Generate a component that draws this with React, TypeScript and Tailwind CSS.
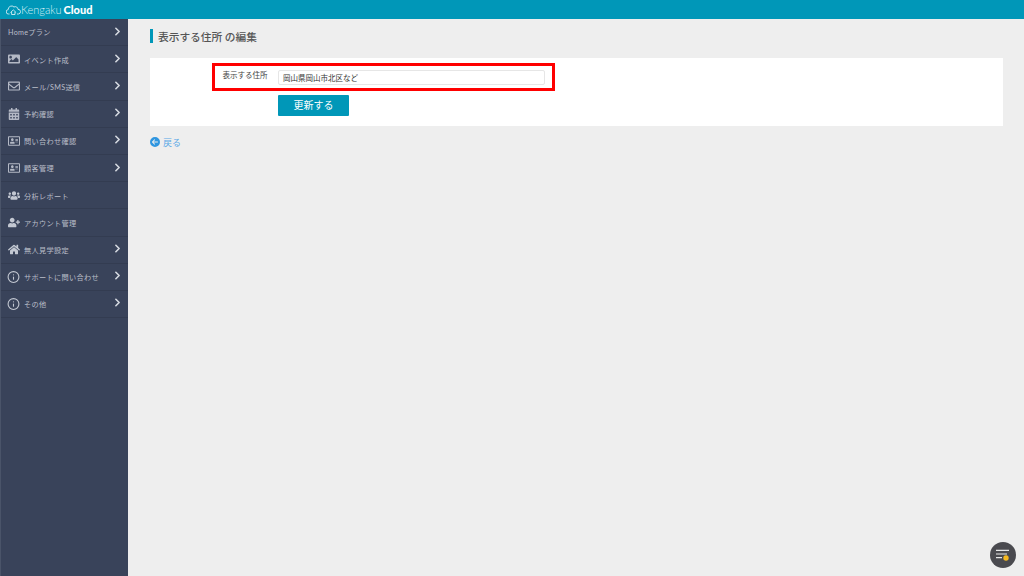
import { ChevronRight } from 'lucide-react'
import { FaCalendarAlt, FaHome, FaImage, FaRegEnvelope, FaUserPlus, FaUsers, FaRegAddressCard } from 'react-icons/fa'
import { FiInfo } from 'react-icons/fi'
import { FaCircleArrowLeft } from 'react-icons/fa6'
import type { ReactNode } from 'react'

const FONT = '[font-family:Lato,"Noto_Sans_CJK_JP",sans-serif]'

type MenuItem = { label: string; icon?: ReactNode; arrow: boolean }

const iconClass = 'h-[12px] w-[12px] text-[#b4b9c5]'
const wideIconClass = 'h-[13px] w-[13px] text-[#c3c8d2]'
const infoIconClass = '-ml-[1px] h-[14px] w-[14px] text-[#c3c8d2]'

const menu: MenuItem[] = [
    { label: 'Homeプラン', arrow: true },
    { label: 'イベント作成', icon: <FaImage className={iconClass} />, arrow: true },
    { label: 'メール/SMS送信', icon: <FaRegEnvelope className={iconClass} />, arrow: true },
    { label: '予約確認', icon: <FaCalendarAlt className={iconClass} />, arrow: true },
    { label: '問い合わせ確認', icon: <FaRegAddressCard className={iconClass} />, arrow: true },
    { label: '顧客管理', icon: <FaRegAddressCard className={iconClass} />, arrow: true },
    { label: '分析レポート', icon: <FaUsers className={wideIconClass} />, arrow: false },
    { label: 'アカウント管理', icon: <FaUserPlus className={wideIconClass} />, arrow: false },
    { label: '無人見学設定', icon: <FaHome className={wideIconClass} />, arrow: true },
    { label: 'サポートに問い合わせ', icon: <FiInfo className={infoIconClass} />, arrow: true },
    { label: 'その他', icon: <FiInfo className={infoIconClass} />, arrow: true },
]

function Logo() {
    return (
        <div className="flex items-center pl-[6px]">
            <svg width="15" height="11" viewBox="0 0 15 11" fill="none" stroke="#d6eef4" strokeWidth="0.9">
                <path d="M3.5 10H2.6a2.2 2.2 0 0 1-.4-4.4A3.4 3.4 0 0 1 8 3 2.7 2.7 0 0 1 12 5.4 2.3 2.3 0 0 1 12.4 10H11" />
                <path d="M4.5 8.5l2.8-2.6 2.8 2.6M5.6 8v2.5H9V8" />
            </svg>
            <span className="text-[11px] font-light leading-none text-[#d6eef4]">Kengaku</span>
            <span className="ml-[2px] text-[11px] font-black leading-none text-white">Cloud</span>
        </div>
    )
}

export default function App() {
    return (
        <div className={`${FONT} relative flex h-[576px] w-[1024px] flex-col overflow-hidden bg-[#eeeeee]`}>
            <header className="flex h-[19px] shrink-0 items-center bg-[#0097b8]">
                <Logo />
            </header>
            <div className="flex min-h-0 flex-1">
                {/* Sidebar */}
                <nav className="w-[128px] shrink-0 border-l border-[#4a5469] bg-[#39435a]">
                    {menu.map((item) => (
                        <div
                            key={item.label}
                            className="flex h-[27.2px] items-center border-b border-[#333c51] pl-[7px] pr-[4px]"
                        >
                            {item.icon && <span className="mr-[4px] flex w-[12px] justify-start">{item.icon}</span>}
                            <span className="translate-y-[1px] whitespace-nowrap text-[7.2px] leading-none tracking-[0.3px] text-[#b9bec9]">
                                {item.label}
                            </span>
                            {item.arrow && (
                                <ChevronRight className="ml-auto h-[13px] w-[13px] -translate-y-[1px] text-[#d5d9e0]" strokeWidth={3} />
                            )}
                        </div>
                    ))}
                </nav>

                {/* Main */}
                <main className="min-w-0 flex-1 pl-[22px] pr-[21px] pt-[10px]">
                    <h1 className="flex h-[14px] items-center border-l-[3px] border-[#0097b8] pl-[5px] text-[10.7px] font-medium text-[#555555]">
                        <span className="translate-y-[0.5px]">表示する住所 の編集</span>
                    </h1>
                    <section className="mt-[15px] h-[68px] bg-white pl-[62px] pt-[5px]">
                        <div className="flex h-[28px] w-[343px] items-center border-[3px] border-[#ff0000] pl-[7.5px]">
                            <label className="w-[55.5px] -translate-y-[1px] text-[7.5px] leading-none text-[#444444]">表示する住所</label>
                            <input
                                readOnly
                                value="岡山県岡山市北区など"
                                className="h-[15px] w-[267px] rounded-[2px] border border-[#e6e6e6] bg-white pl-[4px] text-[7.5px] text-[#333333] outline-none"
                            />
                        </div>
                        <button className="ml-[66px] mt-[4px] flex h-[21px] w-[71px] items-center justify-center rounded-[1px] bg-[#0097b8] text-[10px] text-white">
                            更新する
                        </button>
                    </section>
                    <a className="mt-[11px] flex items-center text-[9px] leading-none text-[#5aa9e6]">
                        <FaCircleArrowLeft className="mr-[3px] h-[10px] w-[10px] text-[#2f96e0]" />
                        戻る
                    </a>
                </main>
            </div>

            {/* Floating button */}
            <div className="absolute bottom-[8px] right-[8px] flex h-[26px] w-[26px] items-center justify-center rounded-full bg-[#4a4a4f]">
                <svg width="16" height="14" viewBox="0 0 16 14" fill="none">
                    <path d="M1 2.3H14M1 6H12M1 9.7H7" stroke="#e8e8e8" strokeWidth="1.2" />
                    <circle cx="11" cy="10" r="2.7" fill="#f6b91f" />
                </svg>
            </div>
        </div>
    )
}
